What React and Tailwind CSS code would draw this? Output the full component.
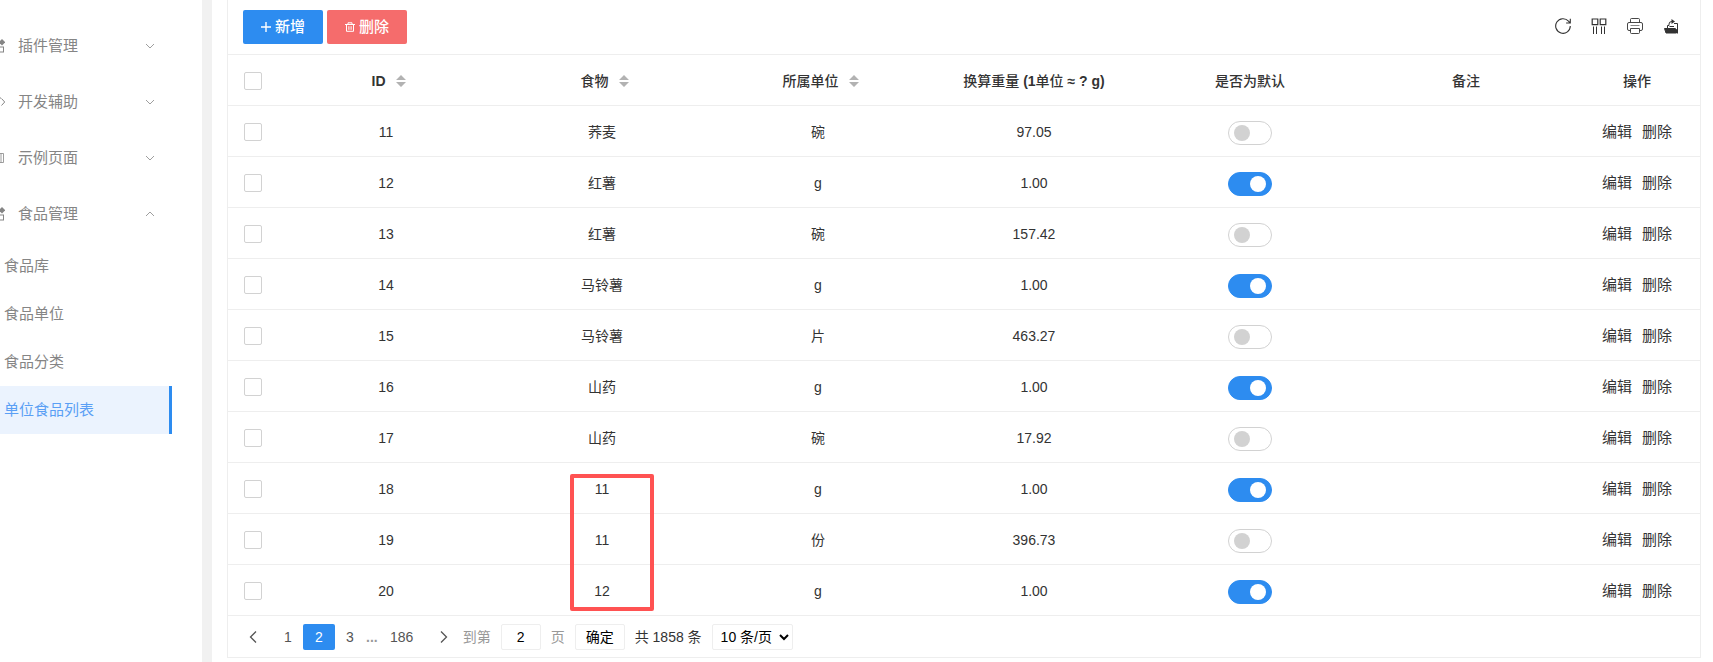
import React, { useState } from "react";

const ROWS = [
  [11, "荞麦", "碗", "97.05", false],
  [12, "红薯", "g", "1.00", true],
  [13, "红薯", "碗", "157.42", false],
  [14, "马铃薯", "g", "1.00", true],
  [15, "马铃薯", "片", "463.27", false],
  [16, "山药", "g", "1.00", true],
  [17, "山药", "碗", "17.92", false],
  [18, "11", "g", "1.00", true],
  [19, "11", "份", "396.73", false],
  [20, "12", "g", "1.00", true],
];

function ComponentIcon() {
  return (
    <svg className="h-4 w-4 shrink-0" viewBox="0 0 16 16" fill="none" stroke="currentColor">
      <rect x="1.5" y="2.5" width="5" height="5" />
      <rect x="1.5" y="9.500" width="5" height="5" />
      <rect x="9.5" y="9" width="5" height="5" />
      <path d="M13 1 16.200 4.200 13 7.400 9.800 4.200z" fill="currentColor" stroke="none" />
    </svg>
  );
}

function CodeIcon() {
  return (
    <svg className="h-4 w-4 shrink-0" viewBox="0 0 16 16" fill="none" stroke="currentColor">
      <path d="M4 4 .5 8 4 12M12.5 4.500 15.7 8l-3.2 3.500M11.500 3.500 7 12.5" />
    </svg>
  );
}

function PageIcon() {
  return (
    <svg className="h-4 w-4 shrink-0" viewBox="0 0 16 16" fill="none" stroke="currentColor" strokeWidth="0.8">
      <path d="M1.500 3.500h13v9h-13zM5.500 3.500v9M12 3.500v9" />
    </svg>
  );
}

function Chevron({ up }) {
  return (
    <svg className="h-3 w-3" viewBox="0 0 12 12" fill="none" stroke="currentColor" strokeWidth="0.8">
      <path d={up ? "M2 8l4-4 4 4" : "M2 4l4 4 4-4"} />
    </svg>
  );
}

function SortIcon() {
  return (
    <svg className="h-3 w-[10px]" viewBox="0 0 10 12" fill="#b2b2b2">
      <path d="M5 0 10 5H0zM5 12 0 7h10z" />
    </svg>
  );
}

const MENU = [
  ["插件管理", ComponentIcon, false],
  ["开发辅助", CodeIcon, false],
  ["示例页面", PageIcon, false],
  ["食品管理", ComponentIcon, true],
];
const SUBMENU = ["食品库", "食品单位", "食品分类", "单位食品列表"];

function Sidebar() {
  return (
    <nav aria-label="主菜单" className="w-[202px] shrink-0 pt-[18px] text-[15px] text-[#858585]">
      {MENU.map(([label, Icon, open]) => (
        <button
          key={label}
          type="button"
          aria-expanded={open}
          className="flex h-14 w-full items-center gap-[13px] pr-[46px] text-left"
        >
          <span className="flex w-[5px] justify-end overflow-hidden">
            <Icon />
          </span>
          <span className="flex-1">{label}</span>
          <Chevron up={open} />
        </button>
      ))}
      <ul className="mr-[30px]">
        {SUBMENU.map((label) => (
          <li key={label}>
            <a
              href="#"
              className={
                label === "单位食品列表"
                  ? "flex h-12 items-center border-r-[3px] border-[#2d8cf0] bg-[#ebf3fe] pl-1 text-[#5a9ff5]"
                  : "flex h-12 items-center pl-1"
              }
            >
              {label}
            </a>
          </li>
        ))}
      </ul>
    </nav>
  );
}

function Toolbar() {
  const tool = "flex h-5 w-5 items-center justify-center";
  return (
    <div className="flex h-[55px] items-center justify-between border-b border-[#eee] pr-[19px] pl-[15px]">
      <div className="flex gap-1 text-[15px] font-medium text-white">
        <button type="button" className="flex h-[34px] w-20 items-center justify-center gap-1 rounded-xs bg-[#2d8cf0]">
          <svg className="h-[10px] w-[10px]" viewBox="0 0 10 10" stroke="currentColor" strokeWidth="1.4">
            <path d="M5 0v10M0 5h10" />
          </svg>
          新增
        </button>
        <button type="button" className="flex h-[34px] w-20 items-center justify-center gap-1 rounded-xs bg-[#f56c6c]">
          <svg className="h-[10px] w-[10px]" viewBox="0 0 10 10" fill="none" stroke="currentColor">
            <path d="M0 2.500h10M3 2.500V.8h4v1.700M1.500 2.500V9.300h7V2.500M3.900 4.200v3.600M6.100 4.200v3.600" />
          </svg>
          删除
        </button>
      </div>
      <div className="flex gap-4 pb-[2px] text-[#333]">
        <button type="button" aria-label="刷新" className={tool}>
          <svg className="h-4 w-4" viewBox="0 0 16 16" fill="none" stroke="currentColor" strokeWidth="1.100">
            <path d="M15.300 8A7.300 7.300 0 1 1 13.500 3.200L15 4.800M15.300 .8v4.200h-4.200" />
          </svg>
        </button>
        <button type="button" aria-label="筛选列" className={tool}>
          <svg className="h-4 w-4" viewBox="0 0 16 16" fill="none" stroke="currentColor">
            <path d="M1.200 1h5.600v5.600H1.200zM9.200 1h5.600v5.600H9.200z" strokeWidth="1.200" />
            <path d="M2.500 8.500V16M5.500 8.500V16M10.500 8.500V16M13.500 8.500V16" />
          </svg>
        </button>
        <button type="button" aria-label="打印" className={tool}>
          <svg className="h-4 w-4" viewBox="0 0 16 16" fill="none" stroke="currentColor" strokeWidth="0.9">
            <path d="M3.500 4.500V1.500q0-1 1-1h7q1 0 1 1v3M3.500 12.500H2q-1.500 0-1.500-1.500V6q0-1.500 1.500-1.500h12q1.500 0 1.500 1.500v5q0 1.500-1.500 1.500h-1.500M3.500 10.500h9v4q0 1-1 1h-7q-1 0-1-1z" />
            <path d="M3.500 7.500h9" strokeWidth="0.6" />
          </svg>
        </button>
        <button type="button" aria-label="导出" className={tool}>
          <svg className="h-4 w-4" viewBox="0 0 16 16" fill="none" stroke="currentColor">
            <path d="M1.500 10.500h10.500l1.500 1V15H3z" fill="currentColor" />
            <path d="M4.500 10V7.500H6M11 5.500h3.500v10M6.500 8.500h4.500M6 7.500V6q0-2.500 3-2.500" />
            <path d="M8.500 1 12 3.500 8.500 6z" fill="currentColor" stroke="none" />
          </svg>
        </button>
      </div>
    </div>
  );
}

const CHECK =
  "block h-[18px] w-[18px] appearance-none rounded-xs border border-[#d2d2d2] bg-white checked:border-[#2d8cf0] checked:bg-[#2d8cf0]";
const SWITCH =
  "relative mx-auto mt-[3px] block h-6 w-11 appearance-none rounded-full border border-[#d2d2d2] bg-white before:absolute before:top-[3px] before:left-[5px] before:h-4 before:w-4 before:rounded-full before:bg-[#d2d2d2] checked:border-[#2d8cf0] checked:bg-[#2d8cf0] checked:before:left-[21px] checked:before:bg-white";

function Head({ children, sort }) {
  return (
    <th className="font-medium">
      <span className={sort ? "flex items-center justify-center pl-[5px]" : "flex items-center justify-center"}>
        <span>{children}</span>
        {sort && (
          <button type="button" aria-label="排序" className="ml-[10px]">
            <SortIcon />
          </button>
        )}
      </span>
    </th>
  );
}

function DataTable() {
  const [on, setOn] = useState(() => ROWS.map((r) => r[4]));
  return (
    <table className="w-full table-fixed border-separate border-spacing-0 text-center [&_td]:border-b [&_td]:border-[#eee] [&_td]:pt-px [&_th]:border-b [&_th]:border-[#eee] [&_th]:pt-px">
      <colgroup>
        <col className="w-[50px]" />
        <col />
        <col />
        <col />
        <col />
        <col />
        <col />
        <col className="w-[126px]" />
      </colgroup>
      <thead>
        <tr className="h-[51px]">
          <th className="pl-4">
            <input type="checkbox" aria-label="全选" className={CHECK} />
          </th>
          <Head sort>
            <b>ID</b>
          </Head>
          <Head sort>食物</Head>
          <Head sort>所属单位</Head>
          <Head>
            换算重量 <b>(1</b>单位 <b>≈ ? g)</b>
          </Head>
          <Head>是否为默认</Head>
          <Head>备注</Head>
          <Head>操作</Head>
        </tr>
      </thead>
      <tbody>
        {ROWS.map(([id, food, unit, weight], i) => (
          <tr key={id} className="h-[51px]">
            <td className="pl-4">
              <input type="checkbox" aria-label={`选择 ${id}`} className={CHECK} />
            </td>
            <td>{id}</td>
            <td className={id === 18 ? "relative z-10" : undefined}>
              {food}
              {id === 18 && (
                <span className="pointer-events-none absolute top-[11px] left-1/2 -ml-8 h-[137px] w-[84px] rounded-xs border-4 border-[#ff5252]" />
              )}
            </td>
            <td>{unit}</td>
            <td>{weight}</td>
            <td>
              <input
                type="checkbox"
                role="switch"
                aria-label={`默认 ${id}`}
                checked={on[i]}
                onChange={() => setOn(on.map((v, k) => (k === i ? !v : v)))}
                className={SWITCH}
              />
            </td>
            <td></td>
            <td>
              <span className="flex justify-center gap-[10px] text-[15px]">
                <button type="button">编辑</button>
                <button type="button">删除</button>
              </span>
            </td>
          </tr>
        ))}
      </tbody>
    </table>
  );
}

function Pagination() {
  const box = "h-[26px] rounded-xs border border-[#eee] bg-white text-black";
  return (
    <div className="flex h-[41px] items-center pt-px pl-[9px] text-[#555]">
      <button type="button" aria-label="上一页" className="flex h-[26px] w-8 items-center justify-center">
        <svg className="h-3 w-2" viewBox="0 0 8 12" fill="none" stroke="currentColor" strokeWidth="1.300">
          <path d="M7 .5 1.500 6 7 11.500" />
        </svg>
      </button>
      <button type="button" className="ml-[3px] h-[26px] w-8">1</button>
      <button type="button" aria-current="page" className="-ml-px h-[26px] w-8 rounded-xs bg-[#2d8cf0] font-medium text-white">2</button>
      <button type="button" className="-ml-px h-[26px] w-8">3</button>
      <span className="font-bold text-[#999]">...</span>
      <button type="button" className="h-[26px] w-12">186</button>
      <button type="button" aria-label="下一页" className="ml-[2px] flex h-[26px] w-8 items-center justify-center">
        <svg className="h-3 w-2" viewBox="0 0 8 12" fill="none" stroke="currentColor" strokeWidth="1.300">
          <path d="M1 .5 6.500 6 1 11.500" />
        </svg>
      </button>
      <label className="flex items-center gap-[10px] pl-[3px] text-[#999]">
        到第
        <input type="text" defaultValue="2" aria-label="页码" className={`${box} w-10 text-center text-[#333]`} />
        页
      </label>
      <button type="button" className={`${box} ml-[10px] w-[50px]`}>确定</button>
      <span className="ml-[10px] text-[#333]">共 1858 条</span>
      <select aria-label="每页条数" className={`${box} ml-[10px] w-[81px] pl-1`}>
        <option>10 条/页</option>
        <option>20 条/页</option>
        <option>50 条/页</option>
      </select>
    </div>
  );
}

export default function App() {
  return (
    <div className="flex min-h-screen bg-white font-['Liberation_Sans','Noto_Sans_CJK_SC',sans-serif] text-sm text-[#333]">
      <Sidebar />
      <main className="min-w-0 flex-1 border-l-[10px] border-[#f1f1f1] pr-3 pl-[15px]">
        <section className="border-x border-b border-[#eee]">
          <Toolbar />
          <DataTable />
          <Pagination />
        </section>
      </main>
    </div>
  );
}
